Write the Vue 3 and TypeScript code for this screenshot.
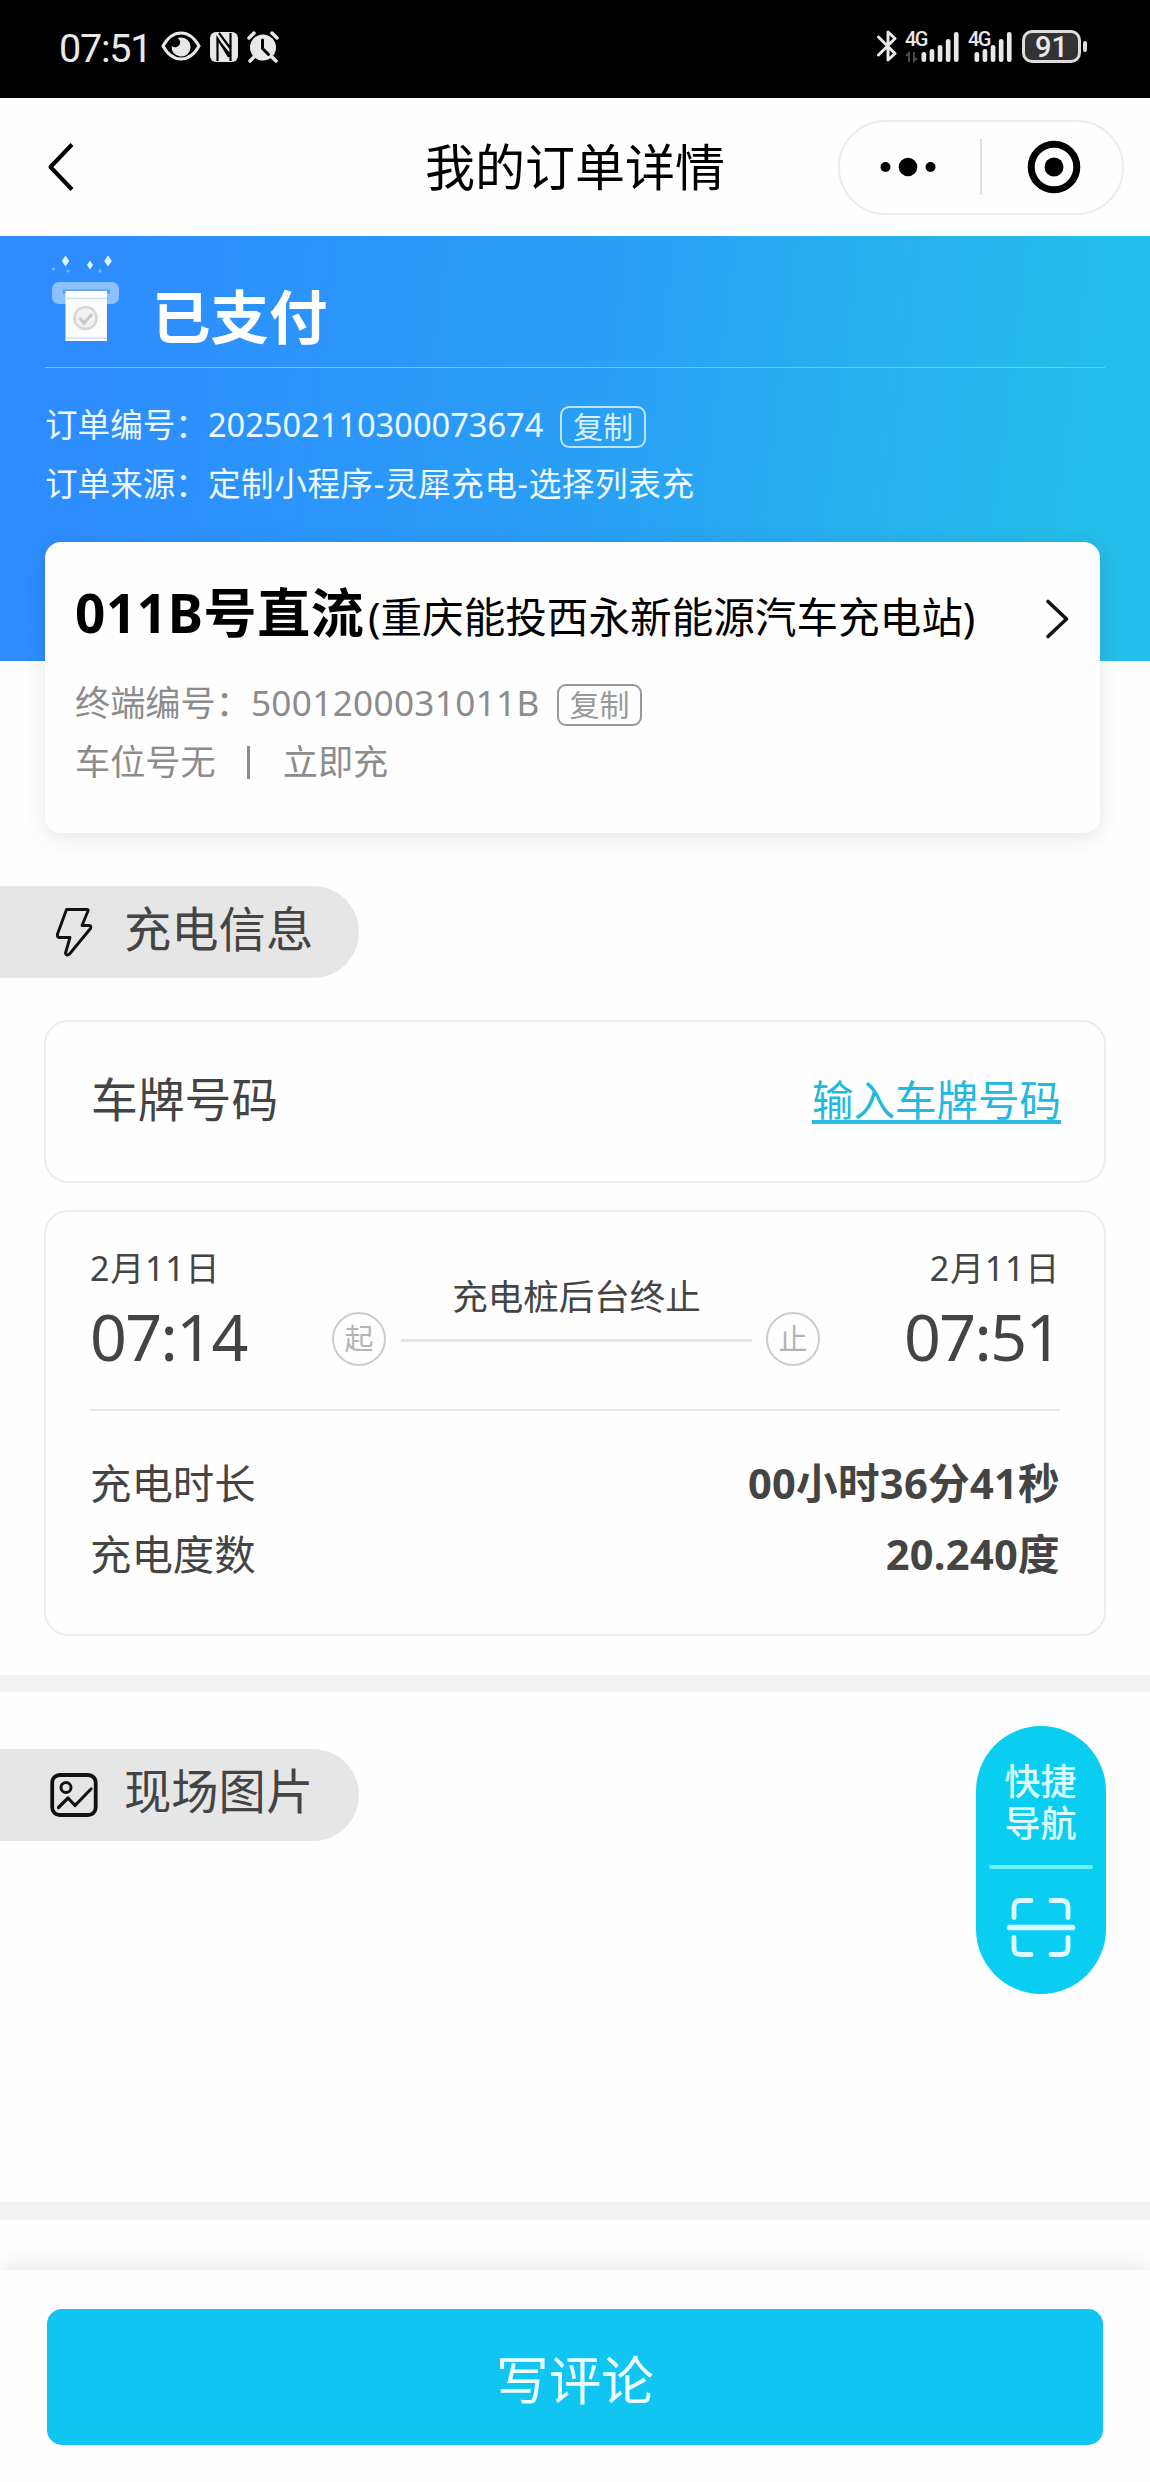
<script setup lang="ts">
interface Row {
  label: string
  value: string
}

interface Signal {
  arrows: boolean
  barsX: number
}

const signals: Signal[] = [
  { arrows: true, barsX: 16.5 },
  { arrows: false, barsX: 6.5 },
]
const bars = [10, 13, 17, 23, 30]

const orderNo = '202502110300073674'
const orderSource = '定制小程序-灵犀充电-选择列表充'
const terminalNo = '5001200031011B'

const usage: Row[] = [
  { label: '充电时长', value: '00小时36分41秒' },
  { label: '充电度数', value: '20.240度' },
]
</script>

<template>
  <div class="page">
    <div class="status">
      <span class="clock">07:51</span>
      <svg class="eye" width="40" height="30" viewBox="0 0 40 30">
        <path d="M2 15C7 6 13 2 20 2s13 4 18 13c-5 9-11 13-18 13S7 24 2 15z" fill="none" stroke="#e8e8e8" stroke-width="3" />
        <path d="M20 6.5a9.5 9.5 0 1 1-9.3 8.2 5 5 0 0 0 8-1.200 5 5 0 0 0-2.200-6.500 9 9 0 0 1 3.500-.5z" fill="#e8e8e8" />
      </svg>
      <svg class="nfc" width="28" height="30" viewBox="0 0 28 30">
        <rect x="0" y="0" width="28" height="30" rx="6" fill="#e8e8e8" />
        <path d="M7.500 29V6.500L19 25M9 1l11.500 15.500V29M20.500 23V1M11 12l9 11" fill="none" stroke="#000" stroke-width="2.200" />
      </svg>
      <svg class="alarm" width="32" height="32" viewBox="0 0 32 32">
        <circle cx="16" cy="16.500" r="13" fill="#e8e8e8" />
        <path d="M2 7l5-5M30 7l-5-5M7 26l-4 4M25 26l4 4" stroke="#e8e8e8" stroke-width="3.500" stroke-linecap="round" />
        <path d="M15.500 9v8.500l6 6" fill="none" stroke="#000" stroke-width="3" stroke-linecap="round" />
      </svg>

      <div class="status-right">
        <svg class="bt" width="20" height="32" viewBox="0 0 20 32">
          <path d="M1.500 7L18 23.500l-7 6.500V2l7 6.500L1.500 25" fill="none" stroke="#e8e8e8" stroke-width="3" stroke-linejoin="round" stroke-linecap="round" />
        </svg>
        <div v-for="(s, i) in signals" :key="i" class="signal" :class="{ first: s.arrows }">
          <span class="net">4G</span>
          <svg width="56" height="32" viewBox="0 0 56 32">
            <path v-if="s.arrows" d="M4 31V22l-3 3M9 21v9l3-3" fill="none" stroke="#4a4a4a" stroke-width="2" />
            <rect v-for="(h, b) in bars" :key="b" :x="s.barsX + b * 8.100" :y="31 - h" width="4.700" :height="h" rx="2.300" fill="#e8e8e8" />
          </svg>
        </div>
        <div class="battery">91</div>
        <span class="battery-cap"></span>
      </div>
    </div>

    <header class="nav">
      <svg class="back" width="28" height="50" viewBox="0 0 28 50">
        <path d="M25 2.500L3.500 25 25 47.500" fill="none" stroke="#000" stroke-width="4" stroke-linejoin="round" />
      </svg>
      <h1>我的订单详情</h1>
      <div class="capsule">
        <svg width="56" height="20" viewBox="0 0 56 20">
          <circle cx="5.500" cy="10" r="5" />
          <circle cx="28" cy="10" r="9.300" />
          <circle cx="50.500" cy="10" r="5" />
        </svg>
        <i></i>
        <svg class="target" width="54" height="54" viewBox="0 0 54 54">
          <circle cx="27" cy="27" r="22.800" fill="none" stroke="#000" stroke-width="7" />
          <circle cx="27" cy="27" r="9.500" />
        </svg>
      </div>
    </header>

    <section class="hero">
      <div class="paid">
        <svg class="receipt" width="70" height="92" viewBox="0 0 70 92">
          <g fill="#d9f3ff">
            <path d="M14.500 4.500l3.800 5.500-3.800 5.500-3.800-5.500zM57 4.500l3.800 5.500-3.800 5.500-3.800-5.500zM39 9.500l3 4.500-3 4.500-3-4.500z" />
          </g>
          <g fill="#6fb6ff">
            <circle cx="2.500" cy="18" r="1.500" />
            <circle cx="17" cy="20" r="1.500" />
            <circle cx="49" cy="20" r="1.800" />
          </g>
          <rect x="1" y="31" width="67" height="22" rx="7" fill="#8cc1ff" />
          <path d="M12 38.500h47v4H12z" fill="#5b9fee" />
          <rect x="14.500" y="40" width="41.500" height="50" fill="#fdfdff" />
          <path d="M14.500 47.500h41.500M14.500 87h41.500" stroke="#cfe0f5" stroke-width="1.500" />
          <circle cx="34.500" cy="67" r="11" fill="#f2f2f2" stroke="#d6d6d6" stroke-width="2.500" />
          <path d="M28.500 67l4.500 5 8-9" fill="none" stroke="#c9c9c9" stroke-width="3.200" />
        </svg>
        <strong>已支付</strong>
      </div>
      <div class="order-line">
        <span>订单编号：</span><span class="order-no">{{ orderNo }}</span><button class="copy">复制</button>
      </div>
      <div class="order-line second">
        <span>订单来源：</span><span class="source">{{ orderSource }}</span>
      </div>
    </section>

    <section class="station">
      <div class="station-title">
        <strong>011B号直流</strong><span>(重庆能投西永新能源汽车充电站)</span>
        <svg width="26" height="42" viewBox="0 0 26 42">
          <path d="M3 3.500L21.500 21 3 38.500" fill="none" stroke="#111" stroke-width="3.600" stroke-linejoin="round" stroke-linecap="round" />
        </svg>
      </div>
      <div class="station-line">
        <span>终端编号：</span><span class="terminal">{{ terminalNo }}</span><button class="copy grey">复制</button>
      </div>
      <div class="station-line parking">
        <span>车位号无</span><i></i><span>立即充</span>
      </div>
    </section>

    <div class="tag charge">
      <svg width="38" height="52" viewBox="0 0 38 52">
        <path d="M11.500 3.500h20.500q1.500 0 1 1.500L27 19.500h7.500q2 .5 1 3L14.500 48q-3.500 2.500-4-1L15 31.500H4q-2-.5-1.500-3.500z" fill="none" stroke="#111" stroke-width="2.900" stroke-linejoin="round" />
      </svg>
      <h2>充电信息</h2>
    </div>

    <section class="box plate">
      <span>车牌号码</span>
      <a>输入车牌号码</a>
    </section>

    <section class="box session">
      <div class="times">
        <div class="moment">
          <span class="date">2月11日</span>
          <span class="time">07:14</span>
        </div>
        <span class="dot">起</span>
        <div class="reason">
          <span>充电桩后台终止</span>
          <i></i>
        </div>
        <span class="dot">止</span>
        <div class="moment end">
          <span class="date">2月11日</span>
          <span class="time">07:51</span>
        </div>
      </div>
      <div class="usage">
        <div v-for="row in usage" :key="row.label" class="usage-row">
          <span>{{ row.label }}</span>
          <strong>{{ row.value }}</strong>
        </div>
      </div>
    </section>

    <div class="strip"></div>

    <div class="tag photos">
      <svg width="48" height="46" viewBox="0 0 48 46">
        <rect x="2.200" y="3" width="43.500" height="40" rx="7.500" fill="none" stroke="#111" stroke-width="3.800" />
        <circle cx="16" cy="15.500" r="5" fill="none" stroke="#111" stroke-width="3" />
        <path d="M8.500 35.500L18 26l7 7.500L41 17" fill="none" stroke="#111" stroke-width="3.200" stroke-linecap="round" stroke-linejoin="round" />
      </svg>
      <h2>现场图片</h2>
    </div>

    <div class="strip lower"></div>

    <footer class="footer">
      <button class="review">写评论</button>
    </footer>

    <aside class="quick">
      <span>快捷导航</span>
      <i></i>
      <svg width="70" height="62" viewBox="0 0 70 62">
        <g fill="none" stroke="#dcfbff" stroke-width="4.800" stroke-linecap="round">
          <path d="M8 20.500V10q0-6.500 6.500-6.500H25M45 3.500h10.500Q62 3.500 62 10v10.500M8 40.500V51q0 6.500 6.500 6.500H25M45 57.500h10.500Q62 57.500 62 51V40.500" />
          <path d="M3.500 30.500h63" stroke-width="5.400" />
        </g>
      </svg>
    </aside>
  </div>
</template>

<style>
body {
  margin: 0;
  background: #fefefe;
}
</style>

<style scoped>
.page {
  position: relative;
  width: 1150px;
  height: 2482px;
  overflow: hidden;
  display: flex;
  flex-direction: column;
  background: #fefefe;
  color: #444;
  font-family: "Noto Sans", "Noto Sans CJK SC", sans-serif;
  white-space: nowrap;
}
h1,
h2 {
  margin: 0;
  font-weight: 400;
}
button {
  box-sizing: border-box;
  padding: 0;
  margin: 0;
  font-family: inherit;
}
svg {
  display: block;
  flex: none;
}

/* status bar */
.status {
  flex: none;
  box-sizing: border-box;
  height: 98px;
  padding: 30px 63px 0 59px;
  display: flex;
  background: #000;
  color: #e8e8e8;
}
.clock {
  width: 102px;
  font: 400 39.5px/37px Roboto, sans-serif;
  letter-spacing: -1.2px;
}
.eye {
  margin-top: 1px;
}
.nfc {
  margin: 2px 0 0 9px;
}
.alarm {
  margin: 1px 0 0 9px;
}
.status-right {
  margin-left: auto;
  display: flex;
}
.bt {
  margin-right: 8px;
}
.signal {
  display: grid;
  width: 54px;
}
.signal.first {
  margin-right: 9px;
}
.signal > * {
  grid-area: 1 / 1;
}
.signal svg {
  margin-top: 1px;
}
.net {
  font: 500 20px/18px Roboto, sans-serif;
  letter-spacing: -1.5px;
}
.battery {
  box-sizing: border-box;
  width: 59px;
  height: 33px;
  border: 3px solid #dcdcdc;
  border-radius: 10px;
  background: #333;
  text-align: center;
  font: 500 29px/28px Roboto, sans-serif;
}
.battery-cap {
  width: 4px;
  height: 11px;
  margin: 11px 0 0 2px;
  border-radius: 2px;
  background: #dcdcdc;
}

/* navigation */
.nav {
  flex: none;
  box-sizing: border-box;
  height: 138px;
  padding: 0 26px 0 47px;
  display: grid;
  grid-template-columns: 1fr auto 1fr;
  align-items: center;
  color: #000;
}
.nav h1 {
  width: 300px;
  margin-right: 21px;
  font-size: 50px;
  line-height: 60px;
}
.capsule {
  justify-self: end;
  box-sizing: border-box;
  width: 286px;
  height: 95px;
  border: 2px solid #ececec;
  border-radius: 48px;
  padding: 0 41px 0 40px;
  display: flex;
  align-items: center;
}
.capsule i {
  width: 2px;
  height: 56px;
  margin: 0 45px 0 44px;
  background: #dedede;
}

/* hero */
.hero {
  flex: none;
  box-sizing: border-box;
  height: 425px;
  padding: 0 45px;
  background: linear-gradient(97deg, #2e8bff 4%, #2a9df6 48%, #25bde9 92%);
  color: #fff;
}
.paid {
  height: 131px;
  display: flex;
  border-bottom: 1px solid rgba(160, 220, 255, 0.6);
}
.receipt {
  margin: 15px 31px 0 6px;
}
.paid strong {
  margin-top: 45px;
  font-size: 58.5px;
  line-height: 70px;
}
.order-line {
  display: flex;
  align-items: center;
  height: 59px;
  margin-top: 29px;
  font-size: 32.6px;
  line-height: 50px;
  color: #eefaff;
}
.order-line span {
  padding-bottom: 4px;
}
.order-line.second {
  margin-top: 0;
}
.order-no {
  width: 352px;
}
.source {
  letter-spacing: 0.6px;
}
.copy {
  width: 86px;
  height: 42px;
  border: 2px solid #bfe4fd;
  border-radius: 9px;
  background: none;
  color: #d8f0ff;
  font-size: 30px;
  line-height: 36px;
}
.copy.grey {
  width: 85px;
  border-color: #999;
  color: #999;
}

/* station card */
.station {
  position: relative;
  flex: none;
  box-sizing: border-box;
  width: 1055px;
  height: 291px;
  margin: -119px 0 0 45px;
  padding: 36px 24px 0 30px;
  border-radius: 16px;
  background: #fefefe;
  box-shadow: 0 4px 22px rgba(0, 0, 0, 0.1);
  color: #8c8c8c;
}
.station-title {
  display: flex;
  align-items: baseline;
  height: 97px;
  color: #000;
}
.station-title strong {
  width: 293px;
  font-size: 53px;
  line-height: 70px;
  letter-spacing: 0.6px;
}
.station-title span {
  font-size: 41.6px;
  line-height: 70px;
}
.station-title svg {
  margin: 0 5px 0 auto;
  align-self: flex-start;
  position: relative;
  top: 20px;
}
.station-line {
  display: flex;
  align-items: center;
  height: 59px;
  font-size: 35.2px;
  line-height: 50px;
}
.station-line span {
  padding-bottom: 6px;
}
.terminal {
  width: 306px;
  letter-spacing: 0.3px;
}
.parking i {
  width: 3px;
  height: 33px;
  margin: 0 33px 3px 31px;
  background: #8c8c8c;
}

/* section tags */
.tag {
  flex: none;
  width: 359px;
  height: 92px;
  display: flex;
  align-items: center;
  border-radius: 0 46px 46px 0;
  background: #e6e6e6;
}
.tag h2 {
  padding-bottom: 8px;
  font-size: 47.3px;
  line-height: 60px;
}
.charge {
  margin-top: 53px;
}
.charge h2 {
  padding-bottom: 6px;
}
.charge svg {
  margin: 0 31px 0 55px;
}
.photos {
  margin-top: 57px;
}
.photos svg {
  margin: 0 26px 0 50px;
}

/* boxes */
.box {
  flex: none;
  box-sizing: border-box;
  width: 1062px;
  margin-left: 44px;
  border: 2px solid #ededed;
  border-radius: 24px;
}
.plate {
  height: 163px;
  margin-top: 42px;
  padding: 0 43px 0 45px;
  display: flex;
  align-items: center;
  justify-content: space-between;
  font-size: 46.8px;
  line-height: 60px;
}
.plate span {
  padding-bottom: 6px;
}
.plate a {
  box-sizing: border-box;
  height: 45px;
  border-bottom: 4px solid #2cbadf;
  font-size: 41.5px;
  line-height: 43px;
  color: #22b9e0;
}
.session {
  height: 426px;
  margin-top: 27px;
  padding: 0 44px;
}
.times {
  height: 197px;
  display: flex;
  border-bottom: 2px solid #e8e8e8;
}
.moment {
  width: 242px;
  padding-top: 33px;
  display: flex;
  flex-direction: column;
}
.date {
  font-size: 34px;
  line-height: 46px;
  letter-spacing: 0.8px;
}
.time {
  font-size: 64.5px;
  line-height: 91px;
  letter-spacing: -1.6px;
}
.moment.end {
  margin-left: auto;
  width: 156px;
  text-align: right;
}
.end .time {
  padding-right: 6px;
}
.dot {
  box-sizing: border-box;
  width: 54px;
  height: 54px;
  margin-top: 100px;
  border: 2px solid #cbcbcb;
  border-radius: 50%;
  text-align: center;
  font-size: 29px;
  line-height: 49px;
  color: #b4b4b4;
}
.reason {
  width: 351px;
  margin: 59px 14px 0 15px;
  display: flex;
  flex-direction: column;
  align-items: center;
  font-size: 35.5px;
  line-height: 50px;
}
.reason i {
  width: 100%;
  height: 3px;
  margin-top: 18px;
  background: #e4e4e4;
}
.usage {
  padding-top: 36px;
}
.usage-row {
  display: flex;
  align-items: center;
  justify-content: space-between;
  height: 71px;
  font-size: 41.4px;
  line-height: 60px;
}
.usage-row strong {
  font-size: 41.6px;
  letter-spacing: 0.3px;
}

/* separators and footer */
.strip {
  flex: none;
  height: 17px;
  margin-top: 39px;
  background: #f2f2f2;
}
.strip.lower {
  height: 18px;
  margin-top: 361px;
}
.footer {
  flex: none;
  box-sizing: border-box;
  height: 212px;
  margin-top: 50px;
  padding: 39px 47px 0;
  background: #fefefe;
  box-shadow: 0 -2px 22px rgba(0, 0, 0, 0.11);
}
.review {
  display: block;
  width: 1056px;
  height: 136px;
  border: 0;
  border-radius: 15px;
  background: #11c5f3;
  color: #eefcff;
  font-size: 52.6px;
}

/* floating shortcut */
.quick {
  position: absolute;
  right: 44px;
  top: 1726px;
  box-sizing: border-box;
  width: 130px;
  height: 268px;
  padding-top: 35px;
  border-radius: 65px;
  display: flex;
  flex-direction: column;
  align-items: center;
  background: #09cef1;
  color: #dcfbff;
  font-size: 36px;
  line-height: 42px;
}
.quick span {
  width: 73px;
  height: 84px;
  white-space: normal;
  font-weight: 500;
}
.quick i {
  width: 104px;
  height: 4px;
  margin: 20px 0 28px;
  border-radius: 2px;
  background: #6df0fb;
}
</style>
